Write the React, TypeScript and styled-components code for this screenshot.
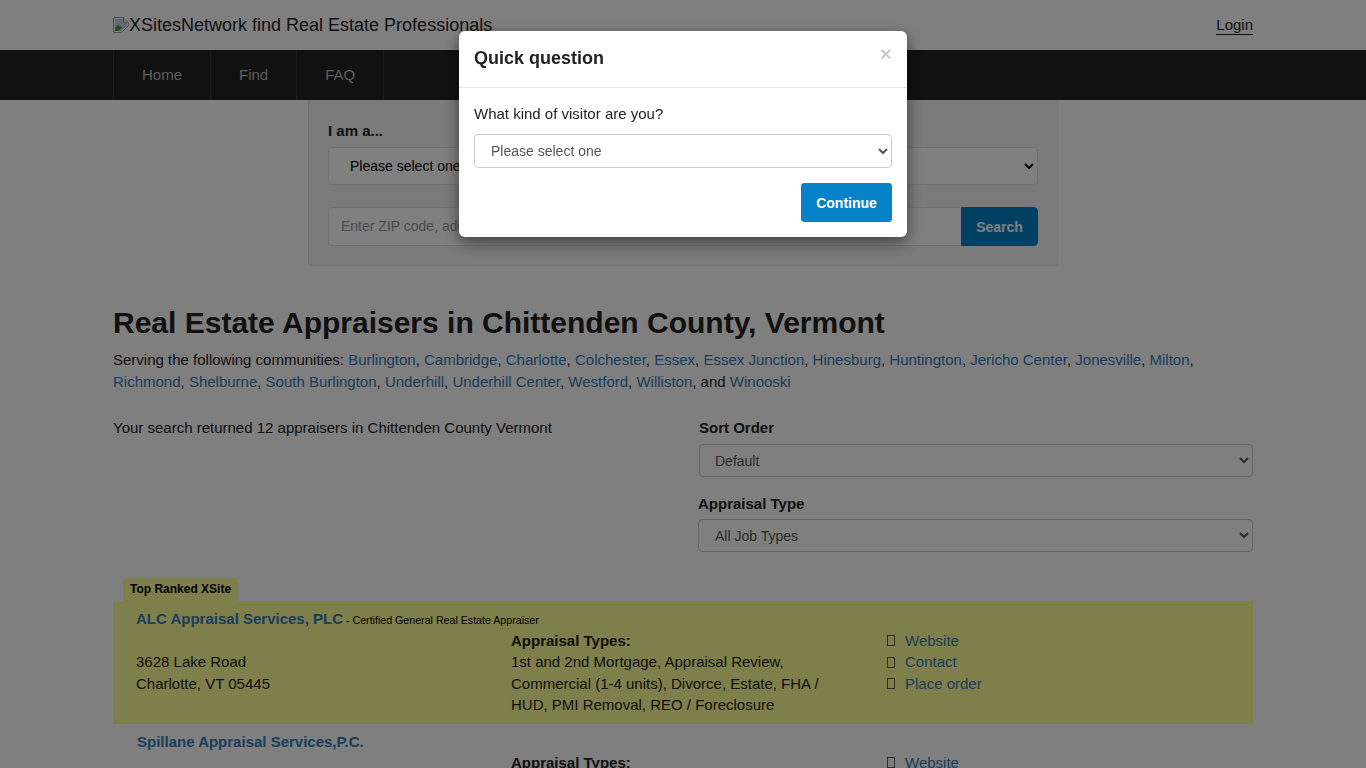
import React from "react";
import styled, { createGlobalStyle } from "styled-components";

const Global = createGlobalStyle`
  * { box-sizing: border-box; }
  html, body { margin: 0; height: 100%; overflow: hidden; }
  body { font-family: "Liberation Sans", Arial, sans-serif; font-size: 15px; line-height: 21.4px; color: #222; background: #fff; }
`;
const Container = styled.div`width: 1140px; margin: 0 auto;`;
const Header = styled.header`height: 50px;`;
const HeaderRow = styled(Container)`display: flex; justify-content: space-between; align-items: flex-start; padding-top: 14px;`;
const Logo = styled.div`display: flex; font-size: 18px; line-height: 22px; color: #222;`;
const LoginLink = styled.a`font-size: 15px; line-height: 18px; color: #222; border-bottom: 1px solid #222; margin-top: 2px;`;
const NavBar = styled.nav`height: 50px; background: #222;`;
const NavList = styled(Container)`display: flex; height: 50px;`;
const NavItem = styled.a`
  display: block; padding: 0 28px; border-left: 1px solid #333; line-height: 50px; color: #bbb; font-size: 15px;
  &:last-child { border-right: 1px solid #333; }
`;
const SearchWell = styled.form`
  width: 750px; height: 166px; margin: 0 auto; padding: 20px 19px; background: #f5f5f5;
  border: 1px solid #e8e8e8; border-top: 0; border-radius: 0 0 4px 4px;
`;
const FieldLabel = styled.label`display: block; font-weight: 700; font-size: 15px; line-height: 21px;`;
const Select = styled.select<{ $h?: number; $ink?: string; $pad?: number; $line?: string }>`
  display: block; width: 100%; height: ${(p) => p.$h ?? 34}px; padding: 0 12px 0 ${(p) => p.$pad ?? 12}px;
  font: 14px/20px "Liberation Sans", Arial, sans-serif; color: ${(p) => p.$ink ?? "#555"};
  background: #fff; border: 1px solid ${(p) => p.$line ?? "#ccc"}; border-radius: 4px;
`;
const WellSelect = styled(Select)`margin-top: 6px;`;
const SearchRow = styled.div`display: flex; margin-top: 22px; height: 39px;`;
const SearchInput = styled.input`
  flex: 1; min-width: 0; padding: 0 12px 2px; font: 14px "Liberation Sans", Arial, sans-serif; color: #555;
  border: 1px solid #e2e2e2; border-right: 0; border-radius: 4px 0 0 4px; background: #fff;
  &::placeholder { color: #999; opacity: 1; }
`;
const PrimaryButton = styled.button<{ $square?: boolean }>`
  width: ${(p) => (p.$square ? 77 : 91)}px; height: 39px; padding: 0; border: 1px solid #0682c9;
  background: #0682c9; color: #fff; font: 700 14px "Liberation Sans", Arial, sans-serif;
  border-radius: ${(p) => (p.$square ? "0 4px 4px 0" : "3px")};
`;
const Title = styled.h1`margin: 40px 0 0; font-size: 30px; line-height: 33px; font-weight: 700; color: #222;`;
const Communities = styled.p`margin: 10.2px 0 0; color: #222;`;
const Place = styled.a`color: #337ab7;`;
const Filters = styled.div`display: grid; grid-template-columns: 585px 1fr; margin-top: 25px;`;
const FilterGroup = styled.div<{ $inset?: number; $after: number }>`
  margin: 0 0 ${(p) => p.$after}px ${(p) => p.$inset ?? 0}px;
`;
const FilterLabel = styled(FieldLabel)<{ $gap: number }>`margin-bottom: ${(p) => p.$gap}px;`;
const Ribbon = styled.div`
  width: fit-content; height: 23px; margin: 11px 0 0 10px; padding: 0 7px; background: #ffff99; border-radius: 3px 3px 0 0;
  font-size: 12px; line-height: 22px; font-weight: 700; color: #000;
`;
const Card = styled.article<{ $top?: boolean }>`
  padding: 8px 0 8.4px 23px; background: ${(p) => (p.$top ? "#ffff99" : "#fff")};
`;
const CardName = styled.div`line-height: 20px;`;
const NameLink = styled.a<{ $nudge?: number }>`
  color: #337ab7; font-weight: 700; font-size: 15px; margin-left: ${(p) => p.$nudge ?? 0}px;
`;
const Credential = styled.span`font-size: 10.65px; color: #000;`;
const CardGrid = styled.div`display: grid; grid-template-columns: 375px 375px 1fr;`;
const Address = styled.div`padding-top: 21.4px;`;
const TypesColumn = styled.div`padding-right: 38px;`;
const TypesHeading = styled.strong`display: block; font-weight: 700;`;
const LinkList = styled.ul`margin: 0; padding: 0 0 0 1px; list-style: none;`;
const LinkRow = styled.li`display: flex; align-items: center; gap: 10px;`;
const Tofu = styled.i`display: block; width: 8px; height: 11px; border: 1px solid #333; opacity: .8;`;
const CardLink = styled.a`color: #337ab7;`;
const Backdrop = styled.div`position: fixed; inset: 0; background: rgba(0, 0, 0, .5);`;
const Modal = styled.div`
  position: fixed; left: 459px; top: 31px; width: 448px; height: 206px; background: #fff;
  border-radius: 6px; box-shadow: 0 5px 15px rgba(0, 0, 0, .5);
`;
const ModalHeader = styled.div`
  display: flex; justify-content: space-between; height: 57px; padding: 15px 15px 0; border-bottom: 1px solid #e5e5e5;
`;
const ModalTitle = styled.h4`margin: 0; font-size: 18px; line-height: 24px; font-weight: 700; color: #222;`;
const Close = styled.span`font-size: 21px; line-height: 15px; font-weight: 700; color: #000; opacity: .2;`;
const ModalBody = styled.div`padding: 15px;`;
const Question = styled.div`line-height: 21px; margin-bottom: 10px; color: #222;`;
const ModalActions = styled.div`display: flex; justify-content: flex-end; margin-top: 15px;`;

const places = ["Burlington","Cambridge","Charlotte","Colchester","Essex","Essex Junction","Hinesburg","Huntington","Jericho Center","Jonesville","Milton","Richmond","Shelburne","South Burlington","Underhill","Underhill Center","Westford","Williston"];
const links = ["Website", "Contact", "Place order"];

function BrokenImage() {
  return (
    <svg width="16" height="16" viewBox="0 0 16 16" style={{ flex: "none", marginTop: 3 }}>
      <path d="M.5 15.5V.5h10l5 5v3l-7 7z" fill="#fff" stroke="#a0a0a0" />
      <path d="M10.5.5v5h5" fill="#e4e4e4" stroke="#a0a0a0" />
      <path d="M2 2h8v4h4v2l-6 6H2z" fill="#bfd2f4" />
      <path d="M2 14v-3.5L5 8l4 2.5L5.5 14z" fill="#4f9a3a" />
    </svg>
  );
}

function Links() {
  return (
    <LinkList>
      {links.map((l) => (
        <LinkRow key={l}><Tofu /><CardLink>{l}</CardLink></LinkRow>
      ))}
    </LinkList>
  );
}

export default function App() {
  return (
    <>
      <Global />
      <Header>
        <HeaderRow>
          <Logo><BrokenImage />XSitesNetwork find Real Estate Professionals</Logo>
          <LoginLink>Login</LoginLink>
        </HeaderRow>
      </Header>
      <NavBar>
        <NavList>
          <NavItem>Home</NavItem>
          <NavItem>Find</NavItem>
          <NavItem>FAQ</NavItem>
        </NavList>
      </NavBar>
      <SearchWell>
        <FieldLabel>I am a...</FieldLabel>
        <WellSelect $h={38} $ink="#000" $pad={17} $line="#e2e2e2"><option>Please select one</option></WellSelect>
        <SearchRow>
          <SearchInput placeholder="Enter ZIP code, address, city or county" />
          <PrimaryButton type="button" $square>Search</PrimaryButton>
        </SearchRow>
      </SearchWell>
      <Container>
        <Title>Real Estate Appraisers in Chittenden County, Vermont</Title>
        <Communities>
          Serving the following communities:{" "}
          {places.map((p) => (
            <React.Fragment key={p}><Place>{p}</Place>, </React.Fragment>
          ))}
          and <Place>Winooski</Place>
        </Communities>
        <Filters>
          <div>Your search returned 12 appraisers in Chittenden County Vermont</div>
          <div>
            <FilterGroup $inset={1} $after={16}>
              <FilterLabel $gap={6}>Sort Order</FilterLabel>
              <Select $h={33} $pad={11}><option>Default</option></Select>
            </FilterGroup>
            <FilterGroup $after={15}>
              <FilterLabel $gap={5}>Appraisal Type</FilterLabel>
              <Select $h={33}><option>All Job Types</option></Select>
            </FilterGroup>
          </div>
        </Filters>
        <Ribbon>Top Ranked XSite</Ribbon>
        <Card $top>
          <CardName>
            <NameLink>ALC Appraisal Services, PLC</NameLink>
            <Credential> - Certified General Real Estate Appraiser</Credential>
          </CardName>
          <CardGrid>
            <Address>3628 Lake Road<br />Charlotte, VT 05445</Address>
            <TypesColumn>
              <TypesHeading>Appraisal Types:</TypesHeading>
              1st and 2nd Mortgage, Appraisal Review, Commercial (1-4 units), Divorce, Estate, FHA / HUD, PMI Removal, REO / Foreclosure
            </TypesColumn>
            <Links />
          </CardGrid>
        </Card>
        <Card>
          <CardName><NameLink $nudge={1}>Spillane Appraisal Services,P.C.</NameLink></CardName>
          <CardGrid>
            <Address />
            <TypesColumn>
              <TypesHeading>Appraisal Types:</TypesHeading>
            </TypesColumn>
            <Links />
          </CardGrid>
        </Card>
      </Container>
      <Backdrop />
      <Modal>
        <ModalHeader>
          <ModalTitle>Quick question</ModalTitle>
          <Close>×</Close>
        </ModalHeader>
        <ModalBody>
          <Question>What kind of visitor are you?</Question>
          <Select><option>Please select one</option></Select>
          <ModalActions><PrimaryButton type="button">Continue</PrimaryButton></ModalActions>
        </ModalBody>
      </Modal>
    </>
  );
}
